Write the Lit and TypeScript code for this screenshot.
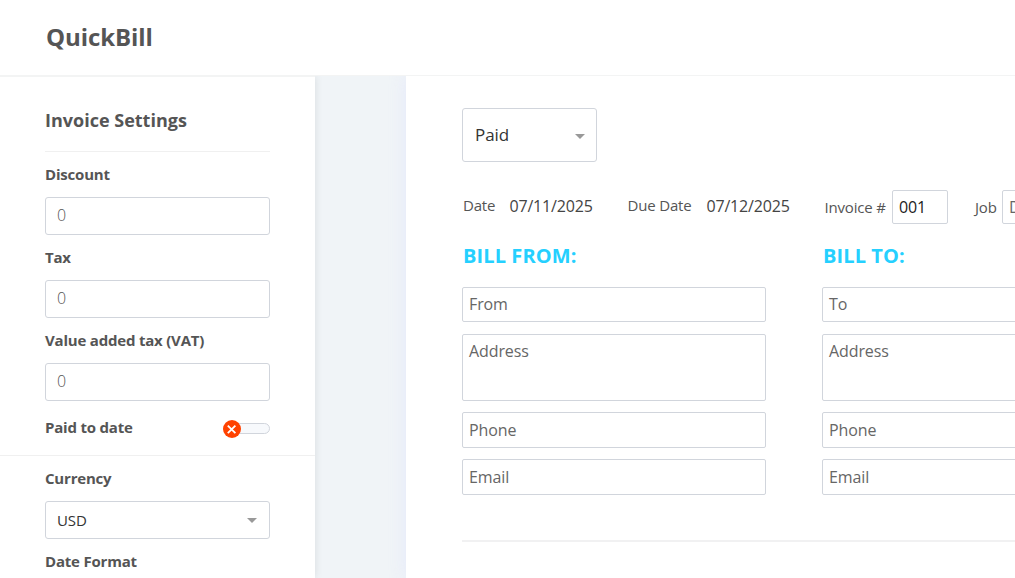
import { LitElement, html, css } from "lit";
import { customElement, property } from "lit/decorators.js";

const caret = html`<svg class="caret" width="10" height="5" viewBox="0 0 10 5"><path d="M0 0h10L5 5z" fill="#999"/></svg>`;

@customElement("app-sidebar")
class AppSidebar extends LitElement {
  static styles = css`
    :host { display: block; width: 315px; height: 502px; flex: none; overflow: hidden; background: #fff; border-top: 1px solid #f3f4f4; box-sizing: border-box; box-shadow: 0 0 8px rgba(0,0,0,.1); position: relative; color: #555; clip-path: inset(0 -12px 0 0); }
    .section { padding: 0 45px; }
    .first { height: 378px; border-bottom: 1px solid #f0f0f0; }
    .title { margin: 0; height: 74px; line-height: 87px; border-bottom: 1px solid #f0f0f0; font-size: 18px; font-weight: 700; white-space: nowrap; }
    .label { height: 45px; line-height: 45px; font-size: 15px; font-weight: 700; letter-spacing: -.2px; white-space: nowrap; }
    .box { box-sizing: border-box; height: 38px; border: 1px solid #d1d5dc; border-radius: 3px; padding: 0 12px 0 11px; display: flex; align-items: center; justify-content: space-between; font-size: 15px; }
    .number { font-weight: 300; font-size: 16px; padding-bottom: 2px; }
    .select { color: #333; letter-spacing: -.1px; }
    .toggle-row { display: flex; align-items: center; justify-content: space-between; height: 54px; }
    .toggle-row .label { height: 54px; line-height: 53px; }
    .toggle { display: flex; align-items: center; width: 47px; height: 18px; padding-top: 1px; }
    .track { box-sizing: border-box; width: 42px; height: 11px; border: 1px solid #d1d5dc; border-radius: 6px; background: #f7f9fc; margin-left: -13px; margin-top: -1px; }
    .knob { flex: none; z-index: 1; }
  `;
  render() {
    return html`
      <div class="section first">
        <h2 class="title">Invoice Settings</h2>
        ${["Discount", "Tax", "Value added tax (VAT)"].map(name => html`
          <div class="label">${name}</div>
          <div class="box number">0</div>`)}
        <div class="toggle-row">
          <span class="label">Paid to date</span>
          <span class="toggle">
            <svg class="knob" width="18" height="18" viewBox="0 0 18 18"><circle cx="9" cy="9" r="9" fill="#ff4200"/><path d="M4.8 5.6l7.6 7.6M12.4 5.6l-7.6 7.6" stroke="#fff" stroke-width="1.8"/></svg>
            <span class="track"></span>
          </span>
        </div>
      </div>
      <div class="section">
        <div class="label">Currency</div>
        <div class="box select"><span>USD</span>${caret}</div>
        <div class="label">Date Format</div>
      </div>`;
  }
}

@customElement("bill-party")
class BillParty extends LitElement {
  @property() heading = "";
  @property() name = "";
  static styles = css`
    :host { display: block; width: 304px; flex: none; }
    .heading { margin: 0 0 0 1px; height: 63px; line-height: 63px; font-size: 20px; font-weight: 700; letter-spacing: .1px; color: #25d0ff; white-space: nowrap; }
    .fields { display: flex; flex-direction: column; }
    .field { box-sizing: border-box; border: 1px solid #d1d5dc; border-radius: 2px; padding: 0 6px; font-size: 16px; letter-spacing: -.1px; color: #666; height: 36px; line-height: 34px; margin-bottom: 11px; }
    .name { height: 35px; line-height: 33px; margin-bottom: 12px; }
    .address { height: 67px; line-height: 33px; }
  `;
  render() {
    return html`
      <h3 class="heading">${this.heading}</h3>
      <div class="fields">
        <div class="field name">${this.name}</div>
        <div class="field address">Address</div>
        <div class="field">Phone</div>
        <div class="field">Email</div>
      </div>`;
  }
}

@customElement("invoice-sheet")
class InvoiceSheet extends LitElement {
  static styles = css`
    :host { display: block; flex: none; width: 800px; height: 502px; box-sizing: border-box; padding: 32px 56px 0; background: #fff; box-shadow: 0 0 16px rgba(226,230,252,.8); color: #555; }
    .status { box-sizing: border-box; width: 135px; height: 54px; border: 1px solid #d1d5dc; border-radius: 3px; padding: 0 11px 0 12px; display: flex; align-items: center; justify-content: space-between; font-size: 17px; letter-spacing: -.1px; color: #333; }
    .status span { padding-bottom: 2px; }
    .status .caret { margin-top: 2px; }
    .meta { display: flex; height: 34px; margin-top: 28px; padding-left: 1px; white-space: nowrap; font-size: 15px; line-height: 31px; letter-spacing: -.18px; }
    .meta > span { flex: none; }
    .date { width: 46.5px; }
    .value { width: 118px; font-size: 16px; line-height: 33px; color: #444; }
    .due { width: 79px; }
    .number { width: 67.5px; line-height: 35px; }
    .job { width: 27px; line-height: 35px; }
    .input { box-sizing: border-box; width: 56px; height: 34px; border: 1px solid #d1d5dc; border-radius: 2px; padding-left: 6px; font-size: 16px; line-height: 33px; color: #222; margin-right: 27px; }
    .meta .description { width: 150px; color: #666; }
    .parties { display: flex; gap: 56px; height: 316px; border-bottom: 2px solid #f1f1f2; }
  `;
  render() {
    return html`
      <div class="status"><span>Paid</span>${caret}</div>
      <div class="meta">
        <span class="date">Date</span><span class="value">07/11/2025</span>
        <span class="due">Due Date</span><span class="value">07/12/2025</span>
        <span class="number">Invoice #</span><span class="input">001</span>
        <span class="job">Job</span><span class="input description">Description</span>
      </div>
      <div class="parties">
        <bill-party heading="BILL FROM:" name="From"></bill-party>
        <bill-party heading="BILL TO:" name="To"></bill-party>
      </div>`;
  }
}

@customElement("app-root")
class AppRoot extends LitElement {
  static styles = css`
    :host { display: block; width: 1015px; height: 578px; overflow: hidden; background: #fff; font-family: "Open Sans", "Noto Sans", sans-serif; }
    .header { box-sizing: border-box; height: 76px; border-bottom: 1px solid #f3f4f4; padding-left: 46px; }
    .logo { margin: 0; font-size: 24px; line-height: 73px; letter-spacing: -.1px; font-weight: 700; color: #555; }
    .body { display: flex; gap: 91px; height: 502px; overflow: hidden; background: #f0f4f7; }
  `;
  render() {
    return html`
      <header class="header"><h1 class="logo">QuickBill</h1></header>
      <div class="body">
        <app-sidebar></app-sidebar>
        <invoice-sheet></invoice-sheet>
      </div>`;
  }
}
